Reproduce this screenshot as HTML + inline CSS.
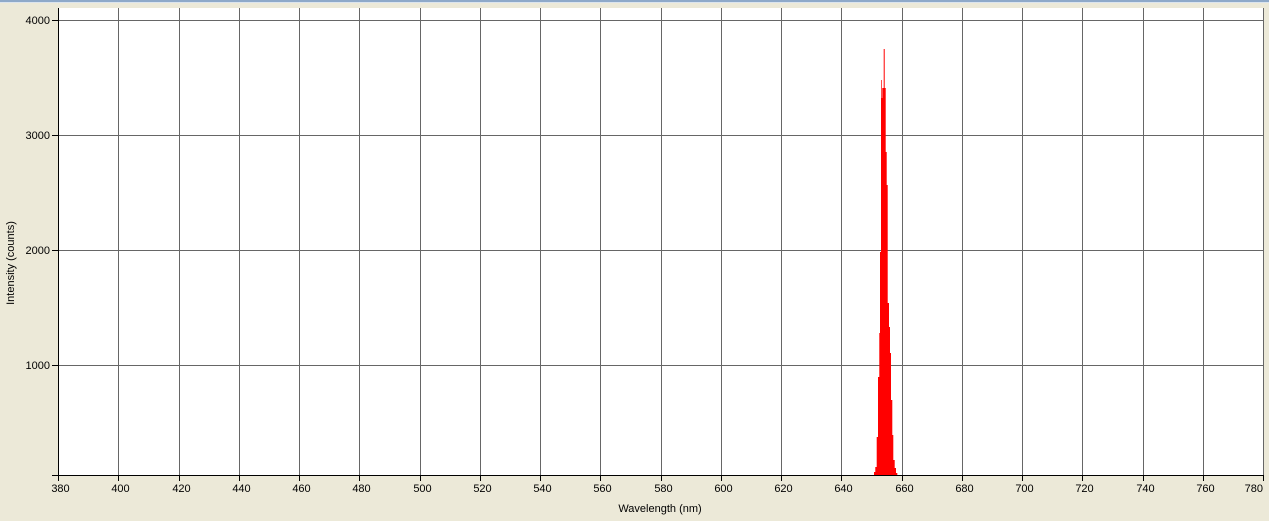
<!DOCTYPE html><html><head><style>
body{margin:0;width:1269px;height:521px;background:#ece9d8;overflow:hidden;font-family:"Liberation Sans",sans-serif}
</style></head><body>
<svg width="1269" height="521" style="position:absolute;left:0;top:0" font-family="Liberation Sans, sans-serif" font-size="11">
<rect x="0" y="0" width="1269" height="2" fill="#8ea9c9"/>
<rect x="0" y="2" width="1269" height="1" fill="#dbe4ee"/>
<rect x="58" y="8" width="1205" height="467" fill="#fff"/>
<g stroke="#666" stroke-width="1">
<line x1="58" y1="20.5" x2="1263" y2="20.5"/><line x1="58" y1="135.5" x2="1263" y2="135.5"/><line x1="58" y1="250.5" x2="1263" y2="250.5"/><line x1="58" y1="365.5" x2="1263" y2="365.5"/>
</g>
<g stroke="#666" stroke-width="1" id="vg"></g>
<polygon fill="#f00" points="874,475 874,472 875.3,472 875.3,467 876.7,467 876.7,437 878,437 878,377 879.3,377 879.3,333 880,333 880,252 881,252 881,80 881.7,80 881.7,98 882.3,98 882.3,88 883.7,88 883.7,49 884.7,49 884.7,88 885.7,88 885.7,152 886.7,152 886.7,185 887.7,185 887.7,303 889,303 889,327 890,327 890,353 891,353 891,400 892.3,400 892.3,435 893.3,435 893.3,460 894.7,460 894.7,468 896,468 896,473 897.3,473 897.3,475"/>
<line x1="58.5" y1="8" x2="58.5" y2="481" stroke="#000"/>
<line x1="52" y1="475.5" x2="1263" y2="475.5" stroke="#000"/>
<line x1="1263.5" y1="8" x2="1263.5" y2="475" stroke="#666"/>
<g stroke="#000"><line x1="52" y1="20.5" x2="58" y2="20.5"/><line x1="52" y1="135.5" x2="58" y2="135.5"/><line x1="52" y1="250.5" x2="58" y2="250.5"/><line x1="52" y1="365.5" x2="58" y2="365.5"/></g>
<g text-anchor="end" fill="#000"><text x="50" y="24">4000</text><text x="50" y="139">3000</text><text x="50" y="254">2000</text><text x="50" y="369">1000</text></g>
<g id="xl" text-anchor="middle" fill="#000"></g>
<text x="660" y="512" text-anchor="middle">Wavelength (nm)</text>
<text transform="translate(14,263) rotate(-90)" text-anchor="middle">Intensity (counts)</text>
</svg>
<script>
var vg=document.getElementById('vg'),xl=document.getElementById('xl'),ns='http://www.w3.org/2000/svg';
for(var i=0;i<=20;i++){var x=Math.round(58+60.25*i)+0.5;
if(i>0&&i<20){var l=document.createElementNS(ns,'line');l.setAttribute('x1',x);l.setAttribute('x2',x);l.setAttribute('y1',8);l.setAttribute('y2',475);vg.appendChild(l);}
var t=document.createElementNS(ns,'line');t.setAttribute('x1',x);t.setAttribute('x2',x);t.setAttribute('y1',475);t.setAttribute('y2',481);t.setAttribute('stroke','#000');xl.parentNode.appendChild(t);
var tx=document.createElementNS(ns,'text');tx.setAttribute('x',i==20?1263:x+2);if(i==20)tx.setAttribute('text-anchor','end');tx.setAttribute('y',492);tx.textContent=380+20*i;xl.appendChild(tx);}
</script>
</body></html>
